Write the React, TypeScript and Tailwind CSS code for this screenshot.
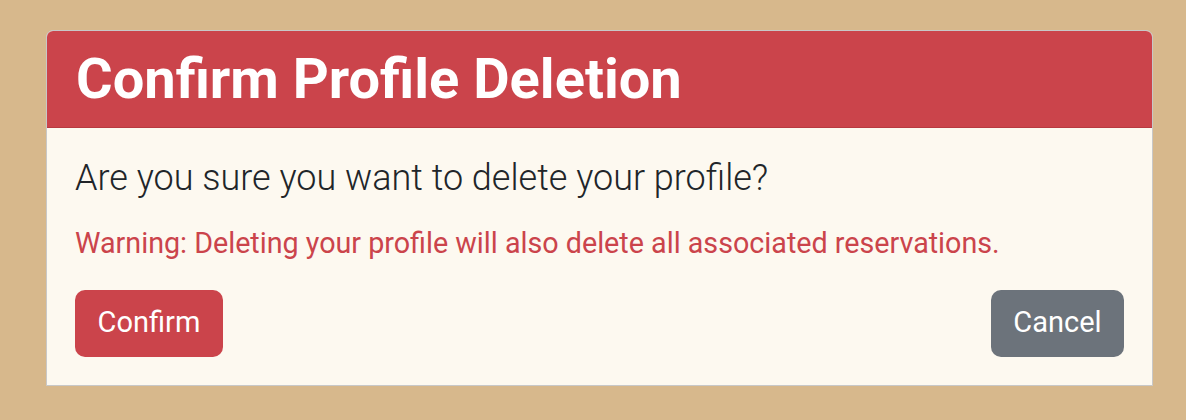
import React from "react";

export default function App() {
  return (
    <div
      className="h-[420px] w-[1186px] bg-[#d7b88c] pl-[46px] pr-[33px] pt-[30px]"
      style={{ fontFamily: "Roboto, 'Liberation Sans', sans-serif" }}
    >
      <div className="overflow-hidden rounded-t-[7px] border border-[#c8c8c8] bg-[#fdf9f0]">
        <div className="border-b border-[#b83a40] bg-[#cb444b] px-[29px] pt-[20px] pb-[20px]">
          <h1 className="text-[56px] font-bold leading-none text-white">Confirm Profile Deletion</h1>
        </div>
        <div className="px-[28px] pt-[32px] pb-[28px]">
          <p className="text-[36px] font-light leading-none text-[#212529]">
            Are you sure you want to delete your profile?
          </p>
          <p className="mt-[33px] text-[28.7px] leading-none text-[#cb444b]">
            Warning: Deleting your profile will also delete all associated reservations.
          </p>
          <div className="mt-[32px] flex items-center justify-between">
            <button className="flex h-[67px] w-[148px] items-center justify-center rounded-[10px] bg-[#cb444b] text-[29px] text-white">
              Confirm
            </button>
            <button className="flex h-[67px] w-[133px] items-center justify-center rounded-[10px] bg-[#6c737b] text-[29px] text-white">
              Cancel
            </button>
          </div>
        </div>
      </div>
    </div>
  );
}
